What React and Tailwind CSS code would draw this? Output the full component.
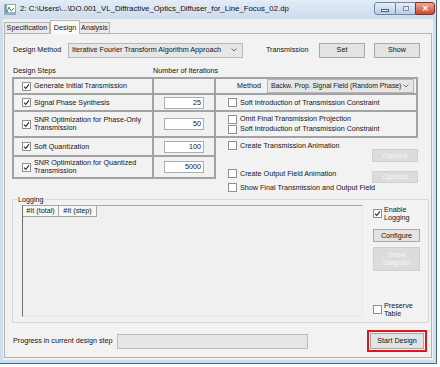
import React from "react";

function Check({ checked }) {
  return (
    <span className="w-[9px] h-[9px] shrink-0 border border-[#8e8f8f] bg-white flex items-center justify-center">
      {checked && (
        <svg width="7" height="7" viewBox="0 0 7 7">
          <path d="M1 3.6 L2.8 5.4 L6 1.4" stroke="#2b2b2b" strokeWidth="1.1" fill="none" />
        </svg>
      )}
    </span>
  );
}

function Btn({ children, className = "", disabled }) {
  return (
    <div
      className={
        "shrink-0 flex flex-col items-center justify-center border leading-[8px] " +
        (disabled
          ? "bg-[#dcdcdc] border-[#d0d0d0] text-[#f6f6f6] "
          : "bg-[#e3e3e3] border-[#a9a9a9] text-[#111] ") +
        className
      }
    >
      {children}
    </div>
  );
}

function Chevron() {
  return (
    <svg width="6" height="4" viewBox="0 0 6 4">
      <path d="M0.5 0.5 L3 3 L5.5 0.5" stroke="#666" strokeWidth="0.9" fill="none" />
    </svg>
  );
}

function NumBox({ value }) {
  return (
    <div className="w-[40px] h-[12px] bg-white border border-[#abadb3] flex items-center justify-end pr-[2px]">
      {value}
    </div>
  );
}

function StepCell({ lines, h }) {
  return (
    <div className={"bg-[#f2f2f2] flex items-center pl-[8px] " + h}>
      <Check checked />
      <div className="ml-[3px] leading-[8px]">
        {lines.map((l) => (
          <div key={l}>{l}</div>
        ))}
      </div>
    </div>
  );
}

function OptionRow({ label }) {
  return (
    <div className="flex items-center">
      <Check />
      <span className="ml-[3px]">{label}</span>
    </div>
  );
}

export default function App() {
  const rows = [
    { lines: ["Generate Initial Transmission"], h: "h-[14px]", n: null },
    { lines: ["Signal Phase Synthesis"], h: "h-[15px]", n: "25" },
    { lines: ["SNR Optimization for Phase-Only", "Transmission"], h: "h-[24px]", n: "50" },
    { lines: ["Soft Quantization"], h: "h-[17px]", n: "100" },
    { lines: ["SNR Optimization for Quantized", "Transmission"], h: "h-[20px]", n: "5000" },
  ];

  return (
    <div className="w-[440px] h-[367px] bg-white overflow-hidden whitespace-nowrap font-['Liberation_Sans',Arial,sans-serif] text-[7.2px] leading-none text-[#151515]">
      <div className="w-[437px] h-[364px] flex flex-col bg-[#cfdded] border-r border-b border-[#3e6b88]">
        {/* title bar */}
        <div className="h-[19px] flex items-start bg-gradient-to-b from-[#e3ecf7] to-[#cddbed]">
          <div className="mt-[4px] ml-[4px] w-[12px] h-[11px] bg-white border border-[#9aa9b8] flex items-end">
            <svg width="10" height="9" viewBox="0 0 10 9">
              <path d="M1 0 V8 H10" stroke="#2c5fa8" strokeWidth="1.2" fill="none" />
              <path d="M2 7 L4 2 L6 6 L9 3" stroke="#3a9a3a" strokeWidth="1" fill="none" />
            </svg>
          </div>
          <div className="ml-[4px] mt-[5px] text-[7.8px] text-[#111]">
            2: C:\Users\...\DO.001_VL_Diffractive_Optics_Diffuser_for_Line_Focus_02.dp
          </div>
          <div className="ml-auto mt-[2px] mr-[1px] flex">
            <div className="w-[22px] h-[13px] rounded-l-[3px] border border-[#6d86a3] bg-gradient-to-b from-[#e6eef7] to-[#bccde2] flex items-center justify-center">
              <span className="w-[8px] h-[3px] bg-white border border-[#4b5f7a] mt-[3px]" />
            </div>
            <div className="w-[19px] h-[13px] border-y border-[#6d86a3] bg-gradient-to-b from-[#e6eef7] to-[#bccde2] flex items-center justify-center">
              <span className="w-[6px] h-[5px] border border-[#7d8ea5] bg-[#dce6f2]" />
            </div>
            <div className="w-[20px] h-[13px] rounded-r-[3px] border border-[#8a2c22] bg-gradient-to-b from-[#eaa896] to-[#c74a33] flex items-center justify-center text-white text-[8px] font-bold">
              ✕
            </div>
          </div>
        </div>

        {/* client */}
        <div className="flex-1 mx-[3px] mb-[3px] bg-[#f0f0f0] flex flex-col">
          {/* tabs */}
          <div className="h-[14px] flex items-end pl-[1px]">
            <div className="w-[46px] h-[11px] border border-b-0 border-[#b5b5b5] bg-[#eaeaea] flex items-center justify-center">
              Specification
            </div>
            <div className="w-[30px] h-[14px] border border-b-0 border-[#b5b5b5] bg-[#fafafa] flex items-center justify-center -mb-[1px] relative z-10">
              Design
            </div>
            <div className="w-[30px] h-[11px] border border-b-0 border-l-0 border-[#b5b5b5] bg-[#eaeaea] flex items-center justify-center">
              Analysis
            </div>
          </div>

          {/* panel */}
          <div className="flex-1 mx-[1px] mb-[2px] border border-[#b3b3b3] bg-[#f2f2f2] flex flex-col">
            {/* design method row */}
            <div className="mt-[8px] pl-[8px] h-[16px] flex items-center">
              <div className="w-[55px]">Design Method</div>
              <div className="w-[175px] h-[15px] border border-[#b8b8b8] bg-[#e6e6e6] flex items-center pl-[3px] pr-[5px]">
                <span>Iterative Fourier Transform Algorithm Approach</span>
                <span className="ml-auto">
                  <Chevron />
                </span>
              </div>
              <div className="ml-[23px] w-[53px]">Transmission</div>
              <Btn className="w-[46px] h-[15px]">Set</Btn>
              <Btn className="ml-[9px] w-[46px] h-[15px]">Show</Btn>
            </div>

            {/* headings */}
            <div className="mt-[8px] pl-[8px] h-[9px] flex items-center">
              <div className="w-[140px]">Design Steps</div>
              <div>Number of Iterations</div>
            </div>

            {/* steps grid */}
            <div className="mt-[2px] pl-[7px] flex items-start">
              <div className="w-[204px] grid grid-cols-[138px_60px] gap-[2px] p-[2px] bg-[#a3a3a3]">
                {rows.map((r) => (
                  <React.Fragment key={r.lines[0]}>
                    <StepCell lines={r.lines} h={r.h} />
                    <div className={"bg-[#f2f2f2] flex items-center justify-center " + r.h}>
                      {r.n && <NumBox value={r.n} />}
                    </div>
                  </React.Fragment>
                ))}
              </div>

              <div className="w-[202px] flex flex-col">
                <div className="flex flex-col gap-[2px] py-[2px] pr-[2px] bg-[#a3a3a3]">
                  <div className="h-[14px] bg-[#f2f2f2] flex items-center justify-end pr-[2px]">
                    <span className="mr-[6px]">Method</span>
                    <div className="w-[147px] h-[14px] border border-[#b8b8b8] bg-[#e6e6e6] flex items-center pl-[3px] pr-[4px]">
                      <span className="text-[6.8px]">Backw. Prop. Signal Field (Random Phase)</span>
                      <span className="ml-auto">
                        <Chevron />
                      </span>
                    </div>
                  </div>
                  <div className="h-[15px] bg-[#f2f2f2] flex items-center pl-[12px]">
                    <OptionRow label="Soft Introduction of Transmission Constraint" />
                  </div>
                  <div className="h-[24px] bg-[#f2f2f2] flex flex-col justify-center gap-[1px] pl-[12px]">
                    <OptionRow label="Omit Final Transmission Projection" />
                    <OptionRow label="Soft Introduction of Transmission Constraint" />
                  </div>
                </div>

                <div className="h-[24px] flex pl-[12px]">
                  <div className="w-[146px] pt-[3px]">
                    <OptionRow label="Create Transmission Animation" />
                  </div>
                  <Btn disabled className="w-[46px] h-[13px] self-end">Options</Btn>
                </div>
                <div className="h-[21px] flex pl-[12px]">
                  <div className="w-[146px] pt-[7px]">
                    <OptionRow label="Create Output Field Animation" />
                  </div>
                  <Btn disabled className="w-[46px] h-[12px] self-end">Options</Btn>
                </div>
                <div className="h-[9px] pl-[12px] flex items-center">
                  <OptionRow label="Show Final Transmission and Output Field" />
                </div>
              </div>
            </div>

            {/* logging group */}
            <div className="mt-[7px] ml-[7px] w-[417px] h-[124px] border border-[#d3d8dd] rounded-[2px] relative flex">
              <span className="absolute -top-[4px] left-[4px] px-[1px] bg-[#f2f2f2]">Logging</span>
              <div className="ml-[9px] mt-[5px] w-[341px] h-[112px] border border-l-[#6f6f6f] border-t-[#a5a5a5] border-r-[#e6e6e6] border-b-[#e6e6e6] bg-[#f0f0f0] flex flex-col">
                <div className="flex h-[11px]">
                  <div className="w-[36px] border-r border-b border-[#a5a5a5] bg-[#f7f7f7] flex items-center justify-center">
                    #It (total)
                  </div>
                  <div className="w-[38px] border-r border-b border-[#a5a5a5] bg-[#f7f7f7] flex items-center justify-center">
                    #It (step)
                  </div>
                </div>
              </div>
              <div className="ml-[10px] flex flex-col pt-[6px] pb-[5px]">
                <div className="flex items-center">
                  <Check checked />
                  <div className="ml-[2px] leading-[7.5px]">
                    <div>Enable</div>
                    <div>Logging</div>
                  </div>
                </div>
                <Btn className="mt-[8px] w-[47px] h-[13px]">Configure</Btn>
                <Btn disabled className="mt-[5px] w-[47px] h-[24px]">
                  <div>Show</div>
                  <div>Diagram</div>
                </Btn>
                <div className="mt-auto flex items-center">
                  <Check />
                  <div className="ml-[2px] leading-[7.5px]">
                    <div>Preserve</div>
                    <div>Table</div>
                  </div>
                </div>
              </div>
            </div>

            {/* progress row */}
            <div className="mt-[7px] pl-[8px] h-[22px] flex items-center">
              <div className="w-[104px]">Progress in current design step</div>
              <div className="w-[191px] h-[15px] border border-[#bcbcbc] bg-[#e6e6e6]" />
              <div className="ml-[59px] w-[60px] h-[22px] border-2 border-[#e3141b] flex items-center justify-center">
                <Btn className="w-[54px] h-[16px]">Start Design</Btn>
              </div>
            </div>
          </div>
        </div>
      </div>
    </div>
  );
}
